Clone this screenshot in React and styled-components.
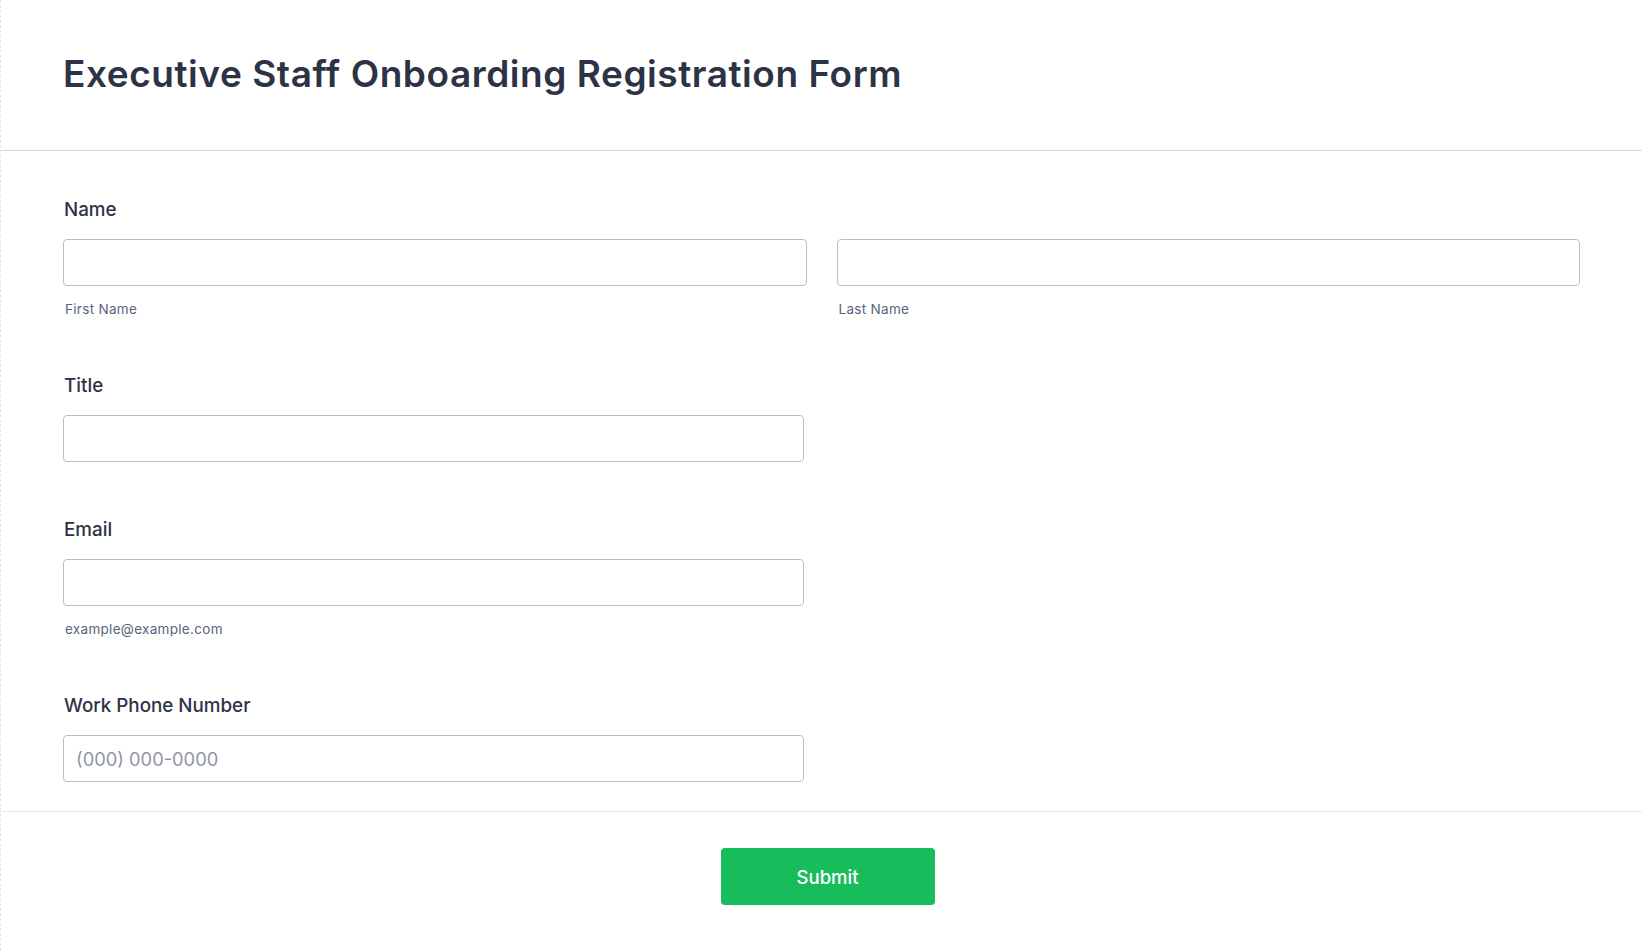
import React from 'react';
import styled, { createGlobalStyle } from 'styled-components';

const GlobalStyle = createGlobalStyle`
  html, body {
    margin: 0;
    padding: 0;
    background: #ffffff;
  }
  body {
    font-family: Inter, "Noto Sans", "Liberation Sans", sans-serif;
    color: #2c3345;
  }
  * {
    box-sizing: border-box;
  }
`;

const Page = styled.div`
  min-height: 951px;
  border-left: 1px dashed #e3e5ea;
  background: #fff;
`;

const Header = styled.header`
  padding: 52px 62px 54px 62px;
  border-bottom: 1px solid #d3d6df;
`;

const Heading = styled.h1`
  margin: 0;
  font-size: 37px;
  line-height: 44px;
  font-weight: 600;
  color: #2c3345;
  letter-spacing: 0.55px;
`;

const Body = styled.div`
  padding: 19px 62px 1px 62px;
  border-bottom: 1px solid #e9eaee;
`;

const Field = styled.div`
  padding: 28px 0;
`;

const Label = styled.label`
  display: block;
  margin: 0 0 17px 1px;
  font-size: 18.8px;
  line-height: 24px;
  font-weight: 500;
  color: #2c3345;
`;

const Row = styled.div`
  display: grid;
  grid-template-columns: 1fr 1fr;
  column-gap: 30px;
`;

const Single = styled.div`
  width: 741px;
`;

const Input = styled.input`
  display: block;
  width: 100%;
  height: 47px;
  padding: 0 12px;
  border: 1px solid #b8bdc9;
  border-radius: 4px;
  font-family: Inter, "Noto Sans", sans-serif;
  font-size: 18.3px;
  font-weight: 400;
  color: #2c3345;
  background: #fff;
  outline: none;

  &::placeholder {
    color: #8f96a3;
  }
`;

const Sublabel = styled.div`
  margin: 14px 0 0 2px;
  font-size: 13.5px;
  line-height: 18px;
  letter-spacing: 0.3px;
  color: #57647e;
`;

const Footer = styled.div`
  display: flex;
  justify-content: center;
  padding: 36px 0 46px 12px;
`;

const SubmitButton = styled.button`
  width: 214px;
  height: 57px;
  border: none;
  border-radius: 4px;
  background: #18bd5b;
  color: #fff;
  font-family: Inter, "Noto Sans", sans-serif;
  font-size: 18.5px;
  font-weight: 500;
  cursor: pointer;
`;

const App = () => {
  return (
    <Page>
      <GlobalStyle />
      <Header>
        <Heading>Executive Staff Onboarding Registration Form</Heading>
      </Header>
      <Body>
        <Field>
          <Label>Name</Label>
          <Row>
            <div>
              <Input type="text" />
              <Sublabel>First Name</Sublabel>
            </div>
            <div>
              <Input type="text" />
              <Sublabel>Last Name</Sublabel>
            </div>
          </Row>
        </Field>
        <Field>
          <Label>Title</Label>
          <Single>
            <Input type="text" />
          </Single>
        </Field>
        <Field>
          <Label>Email</Label>
          <Single>
            <Input type="email" />
            <Sublabel>example@example.com</Sublabel>
          </Single>
        </Field>
        <Field>
          <Label>Work Phone Number</Label>
          <Single>
            <Input type="tel" placeholder="(000) 000-0000" />
          </Single>
        </Field>
      </Body>
      <Footer>
        <SubmitButton type="button">Submit</SubmitButton>
      </Footer>
    </Page>
  );
};

export default App;
